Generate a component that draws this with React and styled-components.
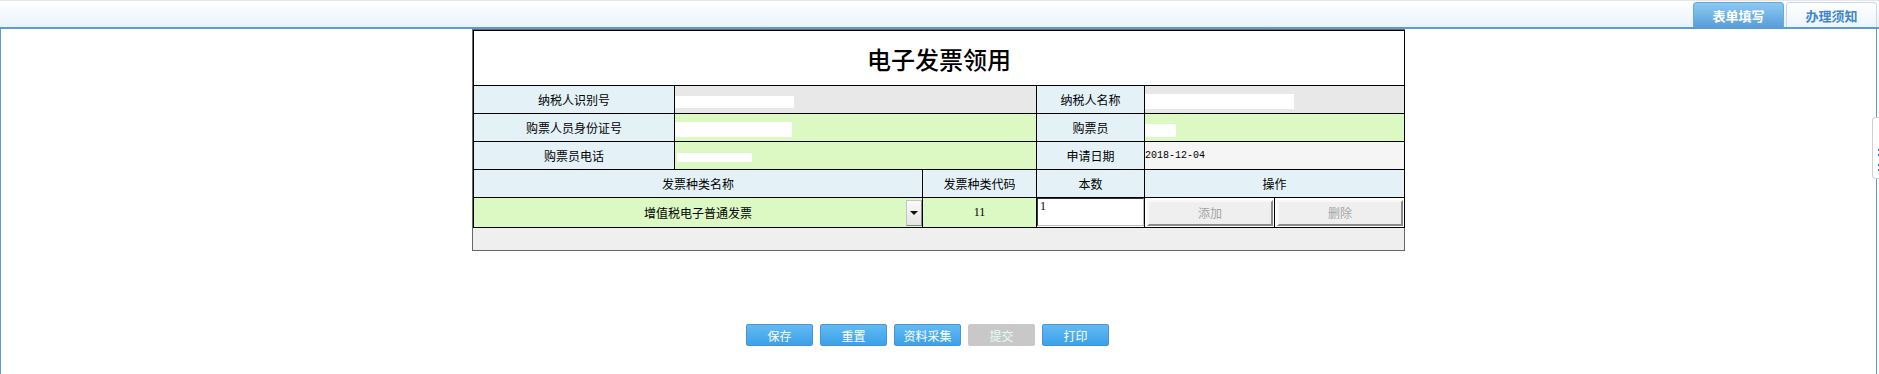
import React from 'react';
import styled, { createGlobalStyle } from 'styled-components';

const GlobalStyle = createGlobalStyle`
  html, body { margin: 0; padding: 0; background: #fff; }
  body {
    font-family: "Noto Sans CJK SC", "Liberation Sans", sans-serif;
    font-size: 12px;
    color: #000;
  }
`;

const Page = styled.div`
  width: 1879px;
  height: 374px;
  overflow: hidden;
  position: relative;
`;

const TopBar = styled.div`
  height: 26px;
  border-top: 1px solid #e4e8ee;
  border-bottom: 2px solid #5b9bd6;
  background: linear-gradient(#ffffff, #e8f3fc);
  display: flex;
  justify-content: flex-end;
  align-items: flex-end;
  gap: 2px;
  padding-right: 2px;
`;

const Tab = styled.div`
  box-sizing: border-box;
  width: 91px;
  height: 25px;
  border-radius: 4px 4px 0 0;
  display: flex;
  align-items: center;
  justify-content: center;
  font-size: 13px;
  font-weight: bold;
  border: 1px solid ${p => (p.$active ? '#6aa9dd' : '#c9d9ea')};
  border-bottom: none;
  color: ${p => (p.$active ? '#fff' : '#3f86d0')};
  background: ${p =>
    p.$active
      ? 'linear-gradient(#8ccaf1, #5a9edb)'
      : 'linear-gradient(#ffffff, #ecf5fd)'};
`;

const Main = styled.div`
  box-sizing: border-box;
  width: 1877px;
  height: 345px;
  border-left: 1px solid #5b9bd6;
  border-right: 1px solid #5b9bd6;
`;

const Sheet = styled.div`
  box-sizing: border-box;
  width: 933px;
  margin: 0 auto;
  border: 1px solid #686868;
`;

const Table = styled.table`
  width: 931px;
  border-collapse: collapse;
  table-layout: fixed;
`;

const Title = styled.td`
  height: 54px;
  border: 1px solid #000;
  text-align: center;
  font-size: 24px;
  font-weight: 500;
  padding: 0;
`;

const Label = styled.td`
  height: 27px;
  padding: 0;
  border: 1px solid #000;
  background: #e4f2f8;
  text-align: center;
  vertical-align: middle;
`;

const Value = styled.td`
  height: 27px;
  padding: 0;
  border: 1px solid #000;
  background: ${p => p.$bg || '#fff'};
  vertical-align: middle;
  text-align: ${p => p.$align || 'left'};
  font-family: ${p => p.$font || 'inherit'};
  font-size: ${p => p.$size || '12px'};
`;

const Mask = styled.span`
  display: inline-block;
  vertical-align: middle;
  background: #fff;
  width: ${p => p.$w}px;
  height: ${p => p.$h}px;
  margin-left: ${p => p.$ml || 0}px;
  margin-top: ${p => p.$mt || 0}px;
`;

const SelectBox = styled.div`
  display: flex;
  align-items: center;
  height: 27px;
`;

const SelectText = styled.span`
  flex: 1;
  text-align: center;
  padding-left: 16px;
`;

const Arrow = styled.span`
  box-sizing: border-box;
  width: 16px;
  height: 26px;
  display: flex;
  align-items: center;
  justify-content: center;
  background: linear-gradient(#fafafa, #e4e4e4);
  border: 1px solid #c4c4c4;
  border-right-color: #888;
  border-bottom-color: #888;
  &::after {
    content: '';
    border-left: 4px solid transparent;
    border-right: 4px solid transparent;
    border-top: 4px solid #111;
  }
`;

const CountCell = styled.td`
  height: 27px;
  padding: 0;
  border: 1px solid #000;
  background: #fff;
  vertical-align: top;
`;

const CountInput = styled.div`
  box-sizing: border-box;
  height: 28px;
  border: 1px solid #333;
  border-right-color: #bbb;
  border-bottom-color: #bbb;
  padding: 0 2px;
  font-family: "Liberation Serif", serif;
  font-size: 12px;
  line-height: 14px;
`;

const ActCell = styled.td`
  height: 27px;
  padding: 1px 1px 1px 2px;
  border: 1px solid #000;
  background: #fff;
`;

const GrayBtn = styled.div`
  box-sizing: border-box;
  height: 26px;
  display: flex;
  align-items: center;
  justify-content: center;
  background: #efefef;
  color: #a4a4a4;
  border: 2px solid;
  border-color: #f8f8f8 #8a8a8a #8a8a8a #f8f8f8;
`;

const Footer = styled.div`
  height: 22px;
  background: #efefef;
`;

const Actions = styled.div`
  display: flex;
  justify-content: center;
  gap: 7px;
  margin-top: 73px;
  padding-right: 22px;
`;

const Button = styled.button`
  box-sizing: border-box;
  width: 67px;
  height: 22px;
  padding: 0;
  border-radius: 2px;
  font-family: "Noto Sans CJK SC", sans-serif;
  font-size: 12px;
  border: 1px solid ${p => (p.disabled ? '#c8c8c8' : '#4b93d3')};
  background: ${p =>
    p.disabled ? '#c8c8c8' : 'linear-gradient(#63baf3, #3aa1ea)'};
  color: ${p => (p.disabled ? '#e4fafa' : '#fff')};
`;

const SideHandle = styled.div`
  position: absolute;
  right: 0;
  top: 117px;
  box-sizing: border-box;
  width: 7px;
  height: 62px;
  background: #fff;
  border: 1px solid #c8d0e2;
  border-right: none;
  border-radius: 4px 0 0 4px;
  display: flex;
  flex-direction: column;
  align-items: flex-end;
  padding-top: 31px;
  gap: 3px;
`;

const Dot = styled.span`
  width: 1px;
  height: 2px;
  background: #3a70c0;
  margin-top: ${p => p.$mt || 0}px;
`;

const cols = [201, 248, 114, 108, 130, 130];

export default function App() {
  return (
    <Page>
      <GlobalStyle />
      <TopBar>
        <Tab $active>表单填写</Tab>
        <Tab>办理须知</Tab>
      </TopBar>
      <Main>
        <Sheet>
          <Table>
            <colgroup>
              {cols.map((w, i) => (
                <col key={i} style={{ width: w }} />
              ))}
            </colgroup>
            <tbody>
              <tr>
                <Title colSpan={6}>电子发票领用</Title>
              </tr>
              <tr>
                <Label>纳税人识别号</Label>
                <Value colSpan={2} $bg="#e8e8e8">
                  <Mask $w={119} $h={12} />
                </Value>
                <Label>纳税人名称</Label>
                <Value colSpan={2} $bg="#e8e8e8">
                  <Mask $w={149} $h={15} />
                </Value>
              </tr>
              <tr>
                <Label>购票人员身份证号</Label>
                <Value colSpan={2} $bg="#ddf9c3">
                  <Mask $w={117} $h={15} />
                </Value>
                <Label>购票员</Label>
                <Value colSpan={2} $bg="#ddf9c3">
                  <Mask $w={31} $h={13} $mt={4} />
                </Value>
              </tr>
              <tr>
                <Label>购票员电话</Label>
                <Value colSpan={2} $bg="#ddf9c3">
                  <Mask $w={75} $h={9} $ml={2} />
                </Value>
                <Label>申请日期</Label>
                <Value colSpan={2} $bg="#f5f5f5" $font='"Liberation Mono", monospace' $size="10px">
                  2018-12-04
                </Value>
              </tr>
              <tr>
                <Label colSpan={2}>发票种类名称</Label>
                <Label>发票种类代码</Label>
                <Label>本数</Label>
                <Label colSpan={2}>操作</Label>
              </tr>
              <tr>
                <Value colSpan={2} $bg="#ddf9c3">
                  <SelectBox>
                    <SelectText>增值税电子普通发票</SelectText>
                    <Arrow />
                  </SelectBox>
                </Value>
                <Value $bg="#ddf9c3" $align="center" $font='"Liberation Serif", serif'>
                  11
                </Value>
                <CountCell>
                  <CountInput>1</CountInput>
                </CountCell>
                <ActCell>
                  <GrayBtn>添加</GrayBtn>
                </ActCell>
                <ActCell>
                  <GrayBtn>删除</GrayBtn>
                </ActCell>
              </tr>
            </tbody>
          </Table>
          <Footer />
        </Sheet>
        <Actions>
          <Button>保存</Button>
          <Button>重置</Button>
          <Button>资料采集</Button>
          <Button disabled>提交</Button>
          <Button>打印</Button>
        </Actions>
      </Main>
      <SideHandle>
        <Dot />
        <Dot />
        <Dot $mt={5} />
        <Dot />
      </SideHandle>
    </Page>
  );
}
